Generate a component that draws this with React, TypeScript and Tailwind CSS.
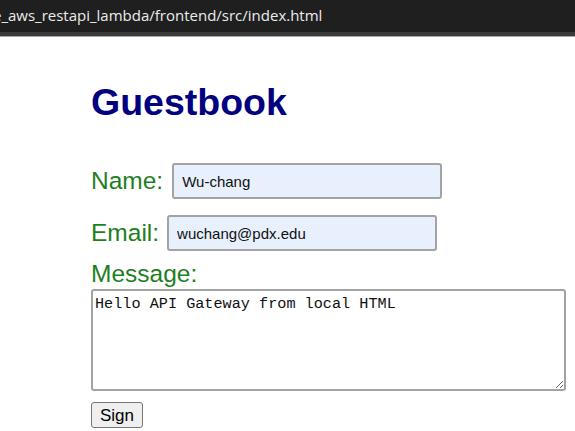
export default function App() {
  return (
    <div className="h-[431px] w-[575px] overflow-hidden bg-white">
      {/* Window title strip */}
      <div className="h-[32px] bg-[#1f1f1f] overflow-hidden whitespace-nowrap">
        <p className="-ml-[7px] pt-[5px] text-[15px] leading-[20px] text-[#ececec] font-['Open_Sans',sans-serif]">
          e_aws_restapi_lambda/frontend/src/index.html
        </p>
      </div>
      <div className="h-[4px] bg-[#3a3a3a]" />
      <div className="h-px bg-[#a8a8a8]" />

      {/* Page */}
      <div className="pl-[91px] font-['Liberation_Sans',Arial,sans-serif]">
        <h1 className="mt-[47px] text-[37.5px] leading-none font-bold text-[#000080]">
          Guestbook
        </h1>

        <form className="mt-[41.5px]" onSubmit={(e) => e.preventDefault()}>
          <div className="flex items-center gap-[9px]">
            <label className="text-[24.5px] leading-none text-[#1f7f1f]">Name:</label>
            <input
              defaultValue="Wu-chang"
              className="h-[36px] w-[270px] rounded-[3px] border-2 border-[#a3a3a3] bg-[#e8f0fe] px-[8px] text-[15px] text-[#111] outline-none"
            />
          </div>

          <div className="mt-[16px] flex items-center gap-[8px]">
            <label className="text-[24.5px] leading-none text-[#1f7f1f]">Email:</label>
            <input
              defaultValue="wuchang@pdx.edu"
              className="h-[36px] w-[270px] rounded-[3px] border-2 border-[#a3a3a3] bg-[#e8f0fe] px-[8px] text-[15px] text-[#111] outline-none"
            />
          </div>

          <label className="mt-[11px] block text-[24.5px] leading-none text-[#1f7f1f]">
            Message:
          </label>
          <textarea
            defaultValue="Hello API Gateway from local HTML"
            className="mt-[2.5px] block h-[102px] w-[475px] rounded-[3px] border-2 border-[#a3a3a3] bg-white px-[2px] pt-[4px] text-[15.2px] leading-[18px] text-[#111] outline-none font-['Liberation_Mono',monospace]"
          />

          <button
            type="submit"
            className="mt-[11px] block h-[26px] w-[52px] rounded-[3px] border border-[#767676] bg-[#efefef] text-[17px] leading-none text-black"
          >
            Sign
          </button>
        </form>
      </div>
    </div>
  );
}
